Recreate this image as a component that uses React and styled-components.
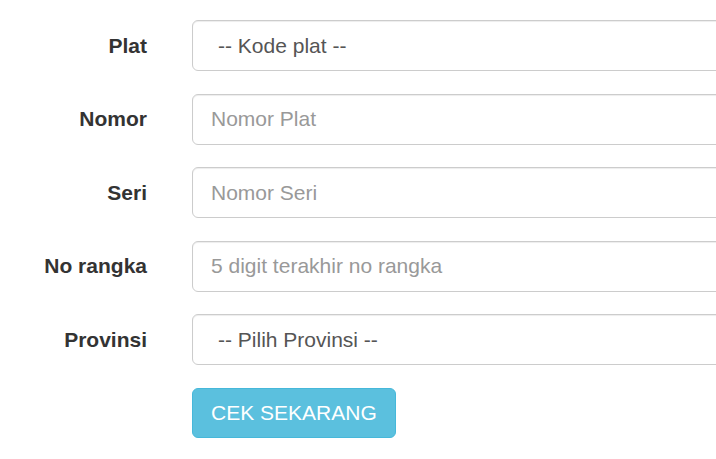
import React from 'react'
import styled, { createGlobalStyle } from 'styled-components'

const GlobalStyle = createGlobalStyle`
    html, body {
        margin: 0;
        padding: 0;
        background: #fff;
        overflow: hidden;
    }
    body {
        font-family: "Liberation Sans", Arial, sans-serif;
        color: #333;
    }
`

// the fields run on past the right edge of the window, so clip them here
const Form = styled.form`
    display: flex;
    flex-direction: column;
    gap: 22.6px;
    padding-top: 20px;
    overflow: hidden;
`

const Row = styled.div`
    display: grid;
    grid-template-columns: 148px 1fr;
    column-gap: 44px;
    align-items: center;
    min-width: 0;
`

const Label = styled.label`
    font-size: 21px;
    font-weight: bold;
    color: #333;
    text-align: right;
    padding-right: 1px;
`

const fieldStyle = `
    box-sizing: border-box;
    height: 51px;
    width: calc(100% + 12px);
    border: 1px solid #ccc;
    border-radius: 6px;
    background: #fff;
    font-family: "Liberation Sans", Arial, sans-serif;
    font-size: 21px;
    color: #555;
    box-shadow: inset 0 1px 1px rgba(0,0,0,.075);
    outline: none;
`

const Input = styled.input`
    ${fieldStyle}
    padding: 0 18px;
    &::placeholder {
        color: #999;
    }
`

const Select = styled.select`
    ${fieldStyle}
    appearance: none;
    padding: 0 25px;
`

const Button = styled.button`
    grid-column: 2;
    justify-self: start;
    height: 50px;
    padding: 0 18px;
    border: 1px solid #46b8da;
    border-radius: 6px;
    background: #5bc0de;
    color: #fff;
    font-family: "Liberation Sans", Arial, sans-serif;
    font-size: 21px;
    text-transform: uppercase;
    cursor: pointer;
`

const App = () => {
    return (
        <>
            <GlobalStyle />
            <Form onSubmit={e => e.preventDefault()}>
                <Row>
                    <Label>Plat</Label>
                    <Select defaultValue="">
                        <option value="">-- Kode plat --</option>
                    </Select>
                </Row>
                <Row>
                    <Label>Nomor</Label>
                    <Input placeholder="Nomor Plat" />
                </Row>
                <Row>
                    <Label>Seri</Label>
                    <Input placeholder="Nomor Seri" />
                </Row>
                <Row>
                    <Label>No rangka</Label>
                    <Input placeholder="5 digit terakhir no rangka" />
                </Row>
                <Row>
                    <Label>Provinsi</Label>
                    <Select defaultValue="">
                        <option value="">-- Pilih Provinsi --</option>
                    </Select>
                </Row>
                <Row>
                    <Button type="submit">Cek Sekarang</Button>
                </Row>
            </Form>
        </>
    )
}

export default App
